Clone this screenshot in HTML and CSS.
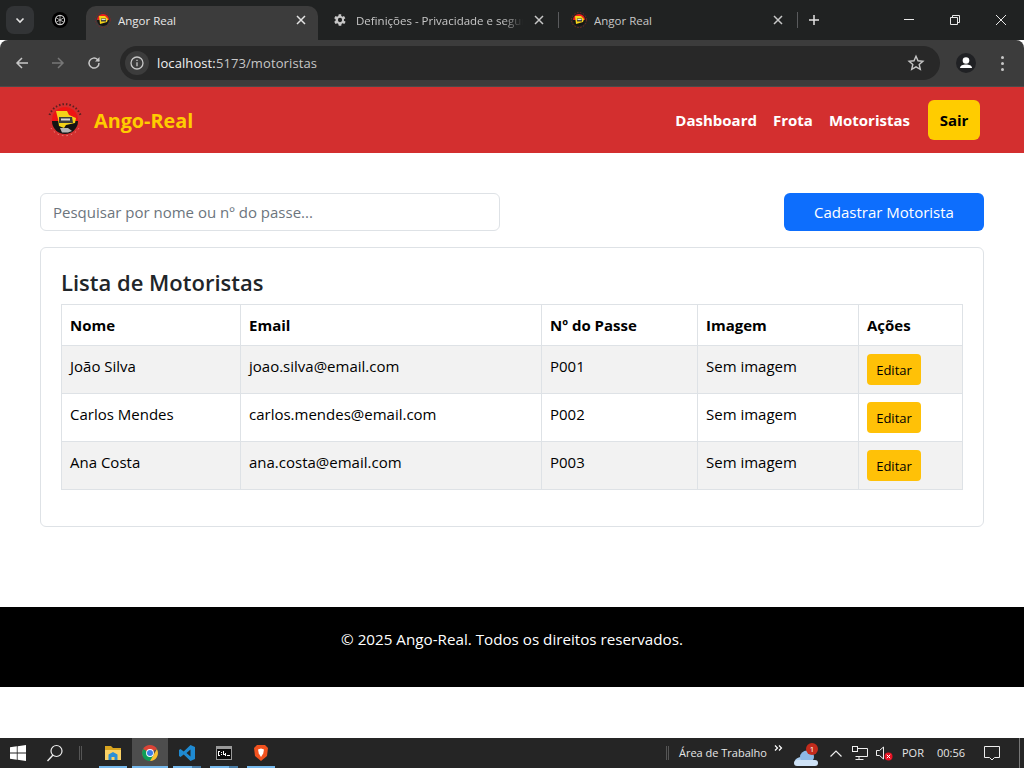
FILE: index.html
```html
<!DOCTYPE html>
<html lang="pt">
<head>
<meta charset="utf-8">
<title>Angor Real</title>
<link rel="stylesheet" href="styles.css">
</head>
<body>
<div class="screen">
  <div class="tabstrip">
    <div class="tab-search"><svg width="12" height="12" viewBox="0 0 12 12"><path d="M2.500 4.500 6 8l3.500-3.500" class="ic" stroke-width="1.600"/></svg></div>
    <div class="pinned"><svg width="16" height="16" viewBox="0 0 16 16"><circle cx="8" cy="8" r="8" fill="#000"/><circle cx="8" cy="8" r="4.600" fill="none" stroke="#cfcfcf" stroke-width="1.100"/><path d="M8 3.500v9M4 5.700l8 4.600M4 10.300l8-4.600" stroke="#cfcfcf" stroke-width=".8"/></svg></div>
    <div class="tab active">
      <svg class="fav" width="16" height="16" viewBox="0 0 16 16"><circle cx="8" cy="8" r="7.500" fill="none" stroke="#7a2a2a" stroke-dasharray="1.500 1.500"/><path d="M2 8a6 6 0 0 1 12 0z" fill="#ee1c1c"/><path d="M2 8a6 6 0 0 0 12 0z" fill="#151515"/><path d="M4 4h6l3 3-1 3-7 2z" fill="#f7d417"/><rect x="6" y="6.500" width="5" height="3" fill="#444"/><rect x="6.500" y="7" width="4" height="1" fill="#ddd"/></svg>
      <span class="tab-title">Angor Real</span>
      <svg class="x" width="16" height="16" viewBox="0 0 16 16"><path d="m4 4 8 8m0-8-8 8" stroke="#e3e3e3" stroke-width="1.500"/></svg>
    </div>
    <div class="tab second">
      <svg class="fav" width="16" height="16" viewBox="0 0 24 24"><path fill="#c7c7c7" fill-rule="evenodd" d="M19.400 13a7.500 7.500 0 0 0 0-2l2.100-1.600-2-3.400-2.500 1a7.500 7.500 0 0 0-1.700-1L15.400 3.300h-3.800L11 6a7.500 7.500 0 0 0-1.700 1l-2.500-1-2 3.400L6.900 11a7.500 7.500 0 0 0 0 2l-2.100 1.600 2 3.400 2.500-1a7.500 7.500 0 0 0 1.700 1l.6 2.700h3.800l.4-2.700a7.500 7.500 0 0 0 1.700-1l2.500 1 2-3.400zM13.500 15.200a3.200 3.200 0 1 1 0-6.400 3.200 3.200 0 0 1 0 6.400z" transform="translate(-1.500 0)"/></svg>
      <span class="tab-title fade">Definições - Privacidade e segur</span>
      <svg class="x" width="16" height="16" viewBox="0 0 16 16"><path d="m4 4 8 8m0-8-8 8" stroke="#c7c7c7" stroke-width="1.500"/></svg>
    </div>
    <div class="sep"></div>
    <div class="tab third">
      <svg class="fav" width="16" height="16" viewBox="0 0 16 16"><circle cx="8" cy="8" r="7.500" fill="none" stroke="#7a2a2a" stroke-dasharray="1.500 1.500"/><path d="M2 8a6 6 0 0 1 12 0z" fill="#ee1c1c"/><path d="M2 8a6 6 0 0 0 12 0z" fill="#151515"/><path d="M4 4h6l3 3-1 3-7 2z" fill="#f7d417"/><rect x="6" y="6.500" width="5" height="3" fill="#444"/><rect x="6.500" y="7" width="4" height="1" fill="#ddd"/></svg>
      <span class="tab-title">Angor Real</span>
      <svg class="x" width="16" height="16" viewBox="0 0 16 16"><path d="m4 4 8 8m0-8-8 8" stroke="#c7c7c7" stroke-width="1.500"/></svg>
    </div>
    <div class="sep"></div>
    <div class="newtab"><svg width="12" height="12" viewBox="0 0 12 12"><path d="M6 1v10M1 6h10" class="ic" stroke-width="1.500"/></svg></div>
    <div class="winctl">
      <svg width="46" height="40" viewBox="0 0 46 40"><path d="M18 19.500h10" stroke="#e8e8e8" fill="none"/></svg>
      <svg width="46" height="40" viewBox="0 0 46 40"><path d="M18.500 17.500h7v7h-7zM20.500 17.500v-2h7v7h-2" stroke="#e8e8e8" fill="none"/></svg>
      <svg width="46" height="40" viewBox="0 0 46 40"><path d="M18 15l10 10M28 15 18 25" stroke="#e8e8e8" fill="none"/></svg>
    </div>
  </div>
  <div class="toolbar">
    <svg class="tool" width="16" height="16" viewBox="0 0 16 16"><path d="M14 8H3M8 3 3 8l5 5" stroke="#c7c7c7" stroke-width="1.500" fill="none"/></svg>
    <svg class="tool" width="16" height="16" viewBox="0 0 16 16"><path d="M2 8h11M8 3l5 5-5 5" stroke="#777" stroke-width="1.500" fill="none"/></svg>
    <svg class="tool" width="16" height="16" viewBox="0 0 16 16"><path d="M13 8a5 5 0 1 1-1.500-3.500L13 6" stroke="#c7c7c7" stroke-width="1.500" fill="none"/><path d="M13.500 2v4.500H9z" fill="#c7c7c7"/></svg>
    <div class="omnibox">
      <div class="info"><svg width="16" height="16" viewBox="0 0 16 16"><circle cx="8" cy="8" r="6" stroke="#c7c7c7" stroke-width="1.300" fill="none"/><path d="M8 7.200v4M8 4.700v1.300" stroke="#c7c7c7" stroke-width="1.300"/></svg></div>
      <span class="url"><b>localhost:</b>5173/motoristas</span>
      <svg class="star" width="18" height="18" viewBox="0 0 18 18"><path d="m9 2.300 2 4.500 4.900.5-3.700 3.200 1.100 4.800L9 12.800l-4.300 2.500 1.100-4.800L2.100 7.300 7 6.800z" stroke="#c7c7c7" stroke-width="1.400" fill="none"/></svg>
    </div>
    <div class="avatar"><svg width="20" height="20" viewBox="0 0 20 20"><circle cx="10" cy="10" r="10" fill="#202124"/><circle cx="10" cy="7.500" r="3.300" fill="#fff"/><path d="M4 15c0-2.500 3-3.500 6-3.500s6 1 6 3.500z" fill="#fff"/></svg></div>
    <div class="dots"><i></i><i></i><i></i></div>
  </div>

  <nav class="navbar">
    <a class="brand">
      <svg width="38" height="38" viewBox="0 0 38 38"><path d="M3.500 14A16.500 16.500 0 0 1 34.500 14" fill="none" stroke="#5a2020" stroke-width="2" stroke-dasharray="1.500 2"/><path d="M5 27a16.500 16.500 0 0 0 28 0" fill="none" stroke="#ee8a80" stroke-width="1" stroke-dasharray="1.500 3"/><circle cx="19" cy="19" r="13" fill="#ee1414"/><path d="M6 20a13 13 0 0 0 26 0z" fill="#141414"/><path d="M10 10h11l2 4 7 3-1 5-9 2-2 3-5-2-1-7z" fill="#f4d21a"/><path d="M14 27h8l4 3-4 1.500h-6z" fill="#b5b5b5"/><path d="M13 16h13l1 6H13z" fill="#3c3c3c"/><path d="M15 17.500h9v2h-9z" fill="#d8d8d8"/></svg>
      <span>Ango-Real</span>
    </a>
    <div class="navlinks">
      <a>Dashboard</a><a>Frota</a><a>Motoristas</a>
      <button class="sair">Sair</button>
    </div>
  </nav>

  <main class="main">
    <div class="actions">
      <input class="search" placeholder="Pesquisar por nome ou nº do passe...">
      <button class="primary">Cadastrar Motorista</button>
    </div>
    <section class="card">
      <h2>Lista de Motoristas</h2>
      <table>
        <colgroup><col class="c1"><col class="c2"><col class="c3"><col class="c4"><col class="c5"></colgroup>
        <thead><tr><th>Nome</th><th>Email</th><th>Nº do Passe</th><th>Imagem</th><th>Ações</th></tr></thead>
        <tbody>
          <tr><td>João Silva</td><td>joao.silva@email.com</td><td>P001</td><td>Sem imagem</td><td><button class="edit">Editar</button></td></tr>
          <tr><td>Carlos Mendes</td><td>carlos.mendes@email.com</td><td>P002</td><td>Sem imagem</td><td><button class="edit">Editar</button></td></tr>
          <tr><td>Ana Costa</td><td>ana.costa@email.com</td><td>P003</td><td>Sem imagem</td><td><button class="edit">Editar</button></td></tr>
        </tbody>
      </table>
    </section>
  </main>

  <footer class="footer">© 2025 Ango-Real. Todos os direitos reservados.</footer>
  <div class="spacer"></div>

  <div class="taskbar">
    <svg class="start" width="16" height="16" viewBox="0 0 16 16"><path fill="#fff" d="M0 2.300 6.800 1.300v6.300H0zM7.600 1.200 16 0v7.600H7.600zM0 8.400h6.800v6.300L0 13.700zM7.600 8.400H16V16l-8.400-1.200z"/></svg>
    <svg class="search-ic" width="18" height="18" viewBox="0 0 18 18"><circle cx="10.500" cy="7" r="5.500" stroke="#eee" stroke-width="1.200" fill="none"/><path d="M7 11 1.500 17" stroke="#eee" stroke-width="1.400"/></svg>
    <div class="grip"></div>
    <div class="apps">
      <div class="app on"><svg width="16" height="16" viewBox="0 0 16 16"><path d="M0 1h6l2 2h8v12H0z" fill="#d9a520"/><path d="M0 5h16v10H0z" fill="#fad165"/><path d="M3.500 9.500 8 7l4.500 2.500V15h-3v-3h-3v3h-3z" fill="#2b8fd6"/></svg></div>
      <div class="app on active"><svg width="16" height="16" viewBox="0 0 16 16"><path d="M8 8 1.100 12A8 8 0 0 1 1.100 4 8 8 0 0 1 14.900 4z" fill="#db4437"/><path d="M8 8 1.100 4A8 8 0 0 0 8 16l3.500-4z" fill="#0f9d58"/><path d="M14.900 4A8 8 0 0 1 8 16l3.500-6z" fill="#fbc02d"/><circle cx="8" cy="8" r="3.900" fill="#fff"/><circle cx="8" cy="8" r="3" fill="#3b7de8"/></svg></div>
      <div class="app on split"><svg width="16" height="16" viewBox="0 0 16 16"><path d="M11.500 0 16 2v12l-4.500 2L4.700 9.400 1.500 12 0 11V5l1.500-1 3.200 2.600zm0 4.500L7.500 8l4 3.500z" fill="#1f8ad2"/></svg></div>
      <div class="app on split"><svg width="16" height="14" viewBox="0 0 16 14"><rect width="16" height="14" fill="#9a9a9a"/><rect x="1" y="3" width="14" height="10" fill="#0c0c0c"/><path d="M2 5h2v1H3v3h1v1H2zM5 6h1v1H5zM5 8h1v1H5zM7 5h1v3h1v-1h1v3H9V9H7zM11 9h3v1h-3z" fill="#fff"/></svg></div>
      <div class="app on"><svg width="14" height="16" viewBox="0 0 14 16"><path d="M3 0h8l3 3-1 8-6 5-6-5-1-8z" fill="#f1521f"/><path d="M4 4.500 7 3.500l3 1-.8 4L7 12 4.800 8.500z" fill="#fff"/></svg></div>
    </div>
    <div class="tray">
      <div class="grip"></div>
      <span class="desk">Área de Trabalho</span>
      <svg class="chev" width="9" height="6" viewBox="0 0 9 6"><path d="m1 .5 2.500 2.500L1 5.500M5 .5 7.500 3 5 5.500" stroke="#fff" stroke-width="1.200" fill="none"/></svg>
      <span class="weather"><svg width="24" height="16" viewBox="0 0 24 16"><ellipse cx="8" cy="11" rx="7" ry="4" fill="#a9cdf0"/><ellipse cx="13" cy="7" rx="7" ry="6.500" fill="#8db9e6"/><rect x="0" y="10" width="24" height="6" rx="3" fill="#cfe2f6"/></svg><em>1</em></span>
      <svg class="sys-up" width="12" height="7" viewBox="0 0 12 7"><path d="m.5 6.500 5.500-5.500 5.500 5.500" stroke="#eee" stroke-width="1.200" fill="none"/></svg>
      <svg class="sys-net" width="16" height="15" viewBox="0 0 16 15"><path d="M3.500 2.500h12v8h-12M7 10.500v3M3.500 13.500h8" stroke="#eee" fill="none"/><rect x=".5" y=".5" width="5" height="5" fill="#222" stroke="#eee"/></svg>
      <svg class="sys-vol" width="17" height="15" viewBox="0 0 17 15"><path d="M.5 4.500h3l4-3.500v12l-4-3.500h-3z" stroke="#eee" fill="none"/><circle cx="12.500" cy="10.500" r="4" fill="#e81123"/><path d="m10.800 8.800 3.400 3.400m0-3.400-3.400 3.400" stroke="#fff"/></svg>
      <span class="por">POR</span>
      <span class="clock">00:56</span>
      <svg class="notif" width="16" height="15" viewBox="0 0 16 15"><path d="M.5.500h15v11h-5l-2.500 2.500-2.500-2.500h-5z" stroke="#eee" fill="none"/></svg>
      <div class="showdesk"></div>
    </div>
  </div>
</div>
</body>
</html>
```
FILE: styles.css
```css
* { box-sizing: border-box; }
html, body { margin: 0; height: 100%; overflow: hidden; }
body { font-family: "Open Sans", "Noto Sans", sans-serif; font-size: 16px; color: #212529; background: #fff; }
.screen { width: 1024px; height: 768px; display: flex; flex-direction: column; }

/* browser chrome */
.tabstrip { height: 40px; background: #202222; display: flex; align-items: flex-start; padding: 6px 0 0 6px; flex: none; }
.ic { stroke: #e3e3e3; fill: none; }
.tab-search { width: 28px; height: 28px; background: #323436; border-radius: 8px; display: flex; align-items: center; justify-content: center; }
.pinned { width: 52px; height: 28px; display: flex; align-items: center; justify-content: center; }
.tab { height: 34px; display: flex; align-items: center; font-size: 11.5px; color: #c7c7c7; padding: 0 9px 6px; gap: 7px; }
.tab.active { width: 232px; background: #3c3c3c; border-radius: 10px 10px 0 0; color: #e8e8e8; }
.tab.second { width: 240px; padding: 0 11px 6px 14px; gap: 8px; }
.tab.third { width: 238px; padding: 0 11px 6px 12px; }
.fav { flex: none; }
.tab-title { flex: 1; white-space: nowrap; overflow: hidden; }
.fade { -webkit-mask-image: linear-gradient(90deg, #000 88%, transparent); mask-image: linear-gradient(90deg, #000 88%, transparent); }
.x { flex: none; }
.sep { width: 1px; height: 16px; background: #5a5b5d; margin-top: 6px; flex: none; }
.newtab { width: 32px; height: 28px; display: flex; align-items: center; justify-content: center; }
.winctl { margin-left: auto; margin-top: -6px; display: flex; }
.winctl svg { display: block; }
.toolbar { height: 47px; background: #3c3c3c; display: flex; align-items: center; padding: 0 0 0 14px; flex: none; border-radius: 8px 8px 0 0; border-bottom: 1px solid #4a4a4a; }
.tool { margin-right: 20px; flex: none; }
.omnibox { width: 820px; height: 34px; margin-left: -2px; background: #282828; border-radius: 17px; display: flex; align-items: center; padding: 0 15px 0 5px; }
.info { width: 24px; height: 24px; border-radius: 50%; background: #3c3c3c; display: flex; align-items: center; justify-content: center; margin-right: 8px; }
.url { font-size: 13px; letter-spacing: .1px; color: #c7c7c7; flex: 1; }
.url b { font-weight: 400; color: #f0f0f0; }
.star { flex: none; }
.avatar { margin-left: 16px; width: 20px; height: 20px; }
.dots { margin-left: 25px; display: flex; flex-direction: column; gap: 3px; }
.dots i { width: 3px; height: 3px; border-radius: 50%; background: #c7c7c7; display: block; }

/* navbar */
.navbar { height: 66px; flex: none; background: #d32f2f; display: flex; align-items: center; justify-content: space-between; padding: 0 44px 0 46px; }
.brand { display: flex; align-items: center; gap: 10px; color: #ffcc00; font-weight: 700; font-size: 19.8px; }
.navlinks { display: flex; align-items: center; gap: 16px; }
.navlinks a { color: #fff; font-weight: 700; font-size: 15px; }
.sair { margin-left: 2px; width: 52px; height: 40px; background: #ffcc00; color: #000; border: 0; border-radius: 6px; font: 700 15px "Open Sans", sans-serif; padding: 0; }

/* main */
.main { padding: 40px 40px 0; flex: none; height: 454px; }
.actions { display: flex; justify-content: space-between; margin-bottom: 16px; }
.search { width: 460px; height: 38px; border: 1px solid #dee2e6; border-radius: 6px; padding: 0 12px; font: 15px "Open Sans", sans-serif; color: #212529; }
.search::placeholder { color: #6c757d; opacity: 1; }
.primary { width: 200px; height: 38px; background: #0d6efd; color: #fff; border: 0; border-radius: 6px; font: 15px "Open Sans", sans-serif; }
.card { height: 280px; border: 1px solid #dee2e6; border-radius: 6px; padding: 20px; }
h2 { margin: 0 0 7px; font-size: 22px; font-weight: 600; line-height: 29px; color: #212529; }
table { width: 901px; border-collapse: collapse; table-layout: fixed; font-size: 15px; color: #000; }
.c1 { width: 179px; } .c2 { width: 301px; } .c3 { width: 156px; } .c4 { width: 161px; } .c5 { width: 104px; }
th, td { border: 1px solid #dee2e6; padding: 8px; text-align: left; vertical-align: top; line-height: 24px; }
th { height: 41px; font-weight: 700; }
td { height: 48px; }
tbody tr:nth-child(odd) td { background: #f2f2f2; }
.edit { display: block; width: 54px; height: 31px; background: #ffc107; color: #000; border: 0; border-radius: 4px; font: 13px "Open Sans", sans-serif; padding: 0; }

/* footer */
.footer { height: 80px; flex: none; background: #000; color: #fff; text-align: center; padding-top: 21px; font-size: 15.2px; line-height: 22px; }
.spacer { flex: 1; background: #fff; }

/* taskbar */
.taskbar { height: 30px; flex: none; background: #252525; display: flex; align-items: center; padding-left: 10px; color: #e6e6e6; font-size: 11px; }
.search-ic { margin-left: 20px; }
.grip { width: 3px; height: 14px; border-left: 1px solid #555; border-right: 1px solid #555; margin-left: 15px; }
.apps { display: flex; margin-left: 13px; height: 30px; }
.app { width: 36px; height: 30px; margin-right: 1px; display: flex; align-items: center; justify-content: center; position: relative; }
.app.active { background: #4d4d4d; }
.app.on::after { content: ""; position: absolute; left: 4px; right: 4px; bottom: 0; height: 2px; background: #76b9ed; }
.app.active::after { left: 0; right: 0; }
.app.split::after { background: linear-gradient(90deg, #76b9ed 68%, #4a7ea8 68%); }
.tray { margin-left: auto; display: flex; align-items: center; height: 30px; padding-right: 4px; }
.tray .grip { margin: 0 10px 0 0; }
.desk { font-size: 11px; margin-bottom: 2px; }
.chev { margin: -10px 0 0 7px; flex: none; }
.weather { position: relative; margin-left: 11px; width: 24px; height: 25px; display: flex; align-items: flex-end; }
.weather em { position: absolute; right: 0; top: 2px; width: 12px; height: 12px; border-radius: 50%; background: #c42b1c; color: #fff; font-size: 8px; font-style: normal; text-align: center; line-height: 12px; }
.sys-up { margin-left: 12px; flex: none; }
.sys-net { margin-left: 10px; flex: none; }
.sys-vol { margin-left: 8px; flex: none; }
.por { margin-left: 9px; font-size: 11px; margin-bottom: 2px; }
.clock { margin-left: 13px; font-size: 11px; margin-bottom: 2px; }
.notif { margin-left: 19px; flex: none; }
.showdesk { width: 1px; height: 30px; background: #777; margin-left: 19px; }
```
